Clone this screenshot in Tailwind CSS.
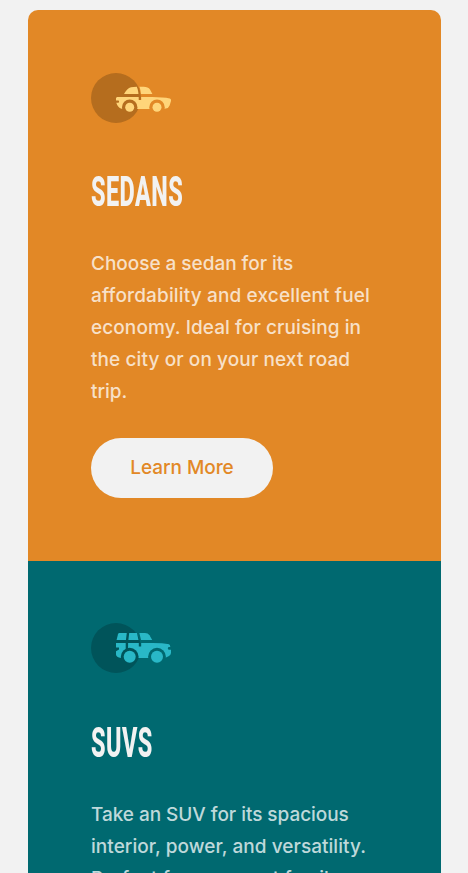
<!DOCTYPE html>
<html lang="en">
<head>
<meta charset="utf-8">
<meta name="viewport" content="width=device-width, initial-scale=1">
<title>Car categories</title>
<script src="https://cdn.jsdelivr.net/npm/@tailwindcss/browser@4"></script>
</head>
<body class="h-screen overflow-hidden bg-[#f2f2f2] pt-[10px] pl-7 font-[Inter,sans-serif]">
<main class="w-[413px] overflow-hidden rounded-t-[10px]">
  <section class="h-[551px] bg-[#e28826] px-[63px] pt-[63px]">
    <svg class="block h-[50px] w-20" viewBox="0 0 80 50" aria-hidden="true">
      <defs><mask id="sedan-arches"><path fill="#fff" d="M0 0h80v50H0z"/><circle cx="38.7" cy="34.3" r="7.7"/><circle cx="66" cy="34.3" r="7.7"/><path d="M46.8 13C48.8 17 49 21 49 27" stroke="#000" stroke-width="2.5" fill="none"/></mask></defs>
      <circle cx="25" cy="25" r="25" fill="#b56d1e"/>
      <g fill="#ffd57a"><g mask="url(#sedan-arches)"><path d="M33 21Q36 15.3 40 14.2Q43 13.5 48 13.7H52Q57 13.5 59 16.5L61.4 21Z"/><path d="M26 24H61Q72 24 78.8 25.5Q80.4 26.1 80 28L78.6 32.4Q77.7 35 74.8 35.4L72 36H31.5Q28 35.5 26.2 32L25.3 29.8H27.5Q28.6 28.7 27.5 27.6H25V25Z"/></g><circle cx="38.7" cy="34.3" r="4.5"/><circle cx="66" cy="34.3" r="4.5"/></g>
    </svg>
    <h2 class="mt-[43px] h-[50px] w-max origin-left scale-x-[.545] font-[Roboto,sans-serif] text-[43px] leading-[50px] font-extrabold tracking-[.8px] text-[#f2f2f2]">SEDANS</h2>
    <p class="mt-[32px] text-[19px] leading-8 font-[450] whitespace-nowrap text-white/75"><span class="tracking-[-.03px]">Choose a sedan for its</span><br><span class="tracking-[.15px]">affordability and excellent fuel</span><br><span class="tracking-[.09px]">economy. Ideal for cruising in</span><br><span class="tracking-[.1px]">the city or on your next road</span><br><span>trip.</span></p>
    <button class="mt-[29.5px] flex h-[60px] w-[182px] items-center justify-center rounded-full bg-[#f2f2f2] pt-0.5 text-[19px] font-[450] tracking-[-.05px] text-[#e28826]">Learn More</button>
  </section>
  <section class="h-[551px] bg-[#006970] px-[63px] pt-[62px]">
    <svg class="block h-[50px] w-20" viewBox="0 0 80 50" aria-hidden="true">
      <defs><mask id="suv-arches"><path fill="#fff" d="M0 0h80v50H0z"/><circle cx="38.7" cy="33.7" r="8.9"/><circle cx="66" cy="33.7" r="8.9"/><path d="M46.9 9L49 18V23.5M37.1 9L35.9 19V27" stroke="#000" stroke-width="2.4" fill="none"/></mask></defs>
      <circle cx="25" cy="25" r="25" fill="#00545a"/>
      <g fill="#29b8c7"><g mask="url(#suv-arches)"><path d="M28.5 10H54Q57 10 58.5 12.3L61.2 17H25.6L27 11.2Q27.3 10 28.5 10Z"/><path d="M25 20H61.5Q72 20 78 21.2Q79.3 21.6 79.3 24H77.5Q76 25.4 77.5 26.7H80V30Q79.8 32 78 33L74 35H30Q25.2 34 25 31.5V28.3L28 26.5V24.5H25Z"/></g><circle cx="38.7" cy="33.7" r="6"/><circle cx="66" cy="33.7" r="6"/></g>
    </svg>
    <h2 class="mt-[44px] h-[50px] w-max origin-left scale-x-[.545] font-[Roboto,sans-serif] text-[43px] leading-[50px] font-extrabold tracking-[.8px] text-[#f2f2f2]">SUVS</h2>
    <p class="mt-[32px] text-[19px] leading-8 font-[450] whitespace-nowrap text-white/75"><span class="tracking-[-.05px]">Take an SUV for its spacious</span><br><span class="tracking-[.05px]">interior, power, and versatility.</span><br><span class="tracking-[.05px]">Perfect for your next family</span><br>vacation and off-road<br>adventures.</p>
  </section>
</main>
</body>
</html>
